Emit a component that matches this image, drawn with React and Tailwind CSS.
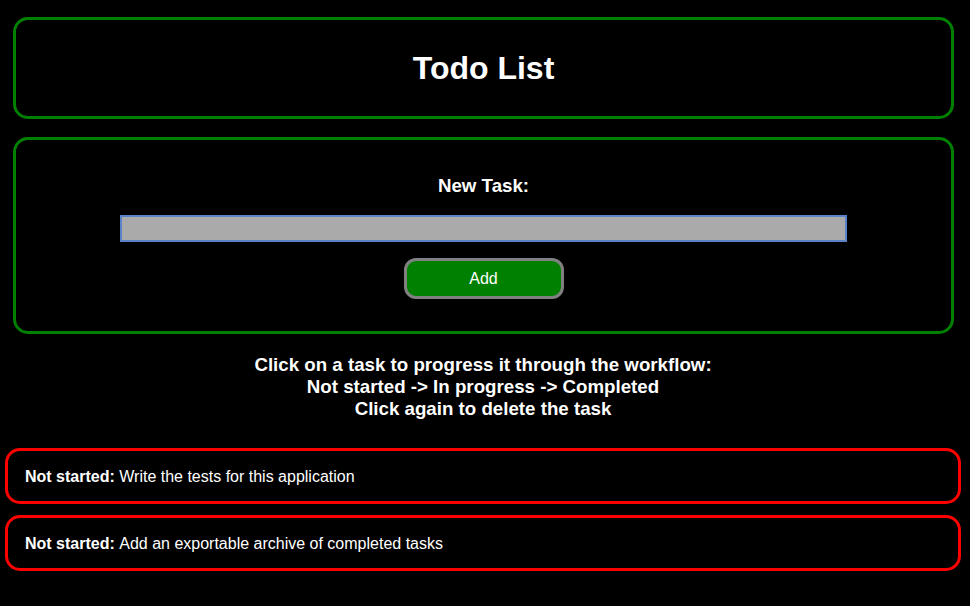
export default function App() {
  const tasks = [
    "Write the tests for this application",
    "Add an exportable archive of completed tasks",
  ];

  return (
    <div className="min-h-[606px] bg-black text-white font-['Liberation_Sans',Arial,sans-serif] pt-[17px]">
      {/* Cabecera */}
      <div className="ml-[13px] mr-[16px] h-[102px] flex items-center justify-center border-[3px] border-[#008000] rounded-[15px]">
        <h1 className="text-[32px] font-bold leading-none">Todo List</h1>
      </div>

      {/* Formulario nueva tarea */}
      <div className="ml-[13px] mr-[16px] mt-[18px] h-[197px] flex flex-col items-center pt-[35px] border-[3px] border-[#008000] rounded-[15px]">
        <label className="text-[18.72px] font-bold leading-[22px]">New Task:</label>
        <input
          type="text"
          className="mt-[18px] w-[727px] h-[27px] bg-[#aaaaaa] border-2 border-[#5a82c8] outline-none"
        />
        <button className="mt-[16px] w-[160px] h-[41px] bg-[#008000] text-white text-[16px] border-[3px] border-[#808080] rounded-[12px]">
          Add
        </button>
      </div>

      {/* Instrucciones */}
      <div className="mt-[20px] text-center text-[18.72px] font-bold leading-[22px] mr-[4px]">
        <p>Click on a task to progress it through the workflow:</p>
        <p>Not started -&gt; In progress -&gt; Completed</p>
        <p>Click again to delete the task</p>
      </div>

      {/* Lista de tareas */}
      <div className="mt-[28px] ml-[5px] mr-[9px] flex flex-col gap-[11px]">
        {tasks.map((task, index) => (
          <div
            key={index}
            className="h-[56px] flex items-center pl-[17px] pt-[1px] border-[3px] border-[#ff0000] rounded-[15px] text-[16px]"
          >
            <span className="font-bold">Not started:</span>
            <span>&nbsp;{task}</span>
          </div>
        ))}
      </div>
    </div>
  );
}
